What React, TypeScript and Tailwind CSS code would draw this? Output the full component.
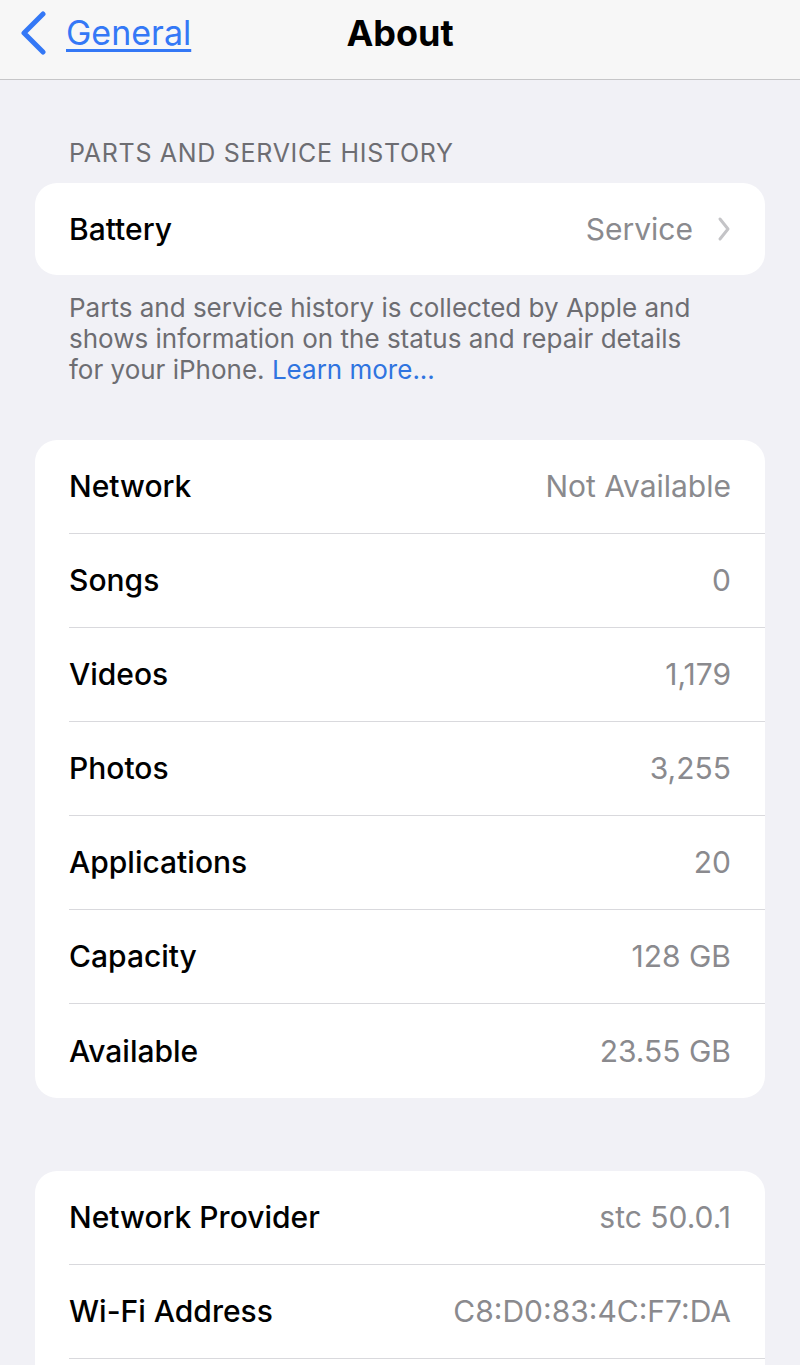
const rows1 = [
  { label: "Network", value: "Not Available" },
  { label: "Songs", value: "0" },
  { label: "Videos", value: "1,179" },
  { label: "Photos", value: "3,255" },
  { label: "Applications", value: "20" },
  { label: "Capacity", value: "128 GB" },
  { label: "Available", value: "23.55 GB" },
];

const rows2 = [
  { label: "Network Provider", value: "stc 50.0.1" },
  { label: "Wi-Fi Address", value: "C8:D0:83:4C:F7:DA" },
];

function Row({ label, value, last }: { label: string; value: string; last?: boolean }) {
  return (
    <div className="pl-[34px]">
      <div
        className={
          "flex items-center justify-between h-[94px] pr-[34px] " +
          (last ? "" : "border-b border-[#d9d9dd]")
        }
      >
        <span className="text-[30px] font-medium text-black">{label}</span>
        <span className="text-[30px] text-[#8a8a8e]">{value}</span>
      </div>
    </div>
  );
}

export default function App() {
  return (
    <div
      className="h-[1365px] w-[800px] overflow-hidden bg-[#f1f1f6]"
      style={{ fontFamily: "Inter, 'Noto Sans', sans-serif" }}
    >
      <header className="relative flex h-[80px] items-center border-b border-[#c6c6c8] bg-[#f7f7f7] pb-[14px]">
        <div className="flex items-center pl-[18px] text-[#3478f6]">
          <svg width="30" height="44" viewBox="0 0 30 44" fill="none">
            <path
              d="M25 3 L6 22 L25 41"
              stroke="#3478f6"
              strokeWidth="5"
              strokeLinecap="round"
              strokeLinejoin="round"
            />
          </svg>
          <span className="ml-[18px] text-[34px] leading-[40px] underline decoration-[3px] underline-offset-[4px]">
            General
          </span>
        </div>
        <div className="absolute left-0 right-0 top-0 flex h-[65px] items-center justify-center pointer-events-none">
          <span className="text-[36px] leading-[40px] font-bold text-black">About</span>
        </div>
      </header>

      <main className="pt-[58px]">
        <div className="px-[69px] text-[25px] leading-[30px] tracking-[0.7px] text-[#6d6d72]">
          PARTS AND SERVICE HISTORY
        </div>

        <div className="mx-[35px] mt-[15px] flex h-[92px] items-center justify-between rounded-[22px] bg-white pl-[34px] pr-[34px]">
          <span className="text-[30px] font-medium text-black">Battery</span>
          <div className="flex items-center gap-[24px]">
            <span className="text-[30px] text-[#8a8a8e]">Service</span>
            <svg width="14" height="26" viewBox="0 0 14 26" fill="none">
              <path
                d="M3 3 L11 13 L3 23"
                stroke="#c4c4c7"
                strokeWidth="3"
                strokeLinecap="round"
                strokeLinejoin="round"
              />
            </svg>
          </div>
        </div>

        <p className="mt-[17px] px-[69px] text-[26px] leading-[31px] text-[#6d6d72] whitespace-nowrap">
          Parts and service history is collected by Apple and
          <br />
          shows information on the status and repair details
          <br />
          for your iPhone. <span className="text-[#2f74e0]">Learn more...</span>
        </p>

        <div className="mx-[35px] mt-[55px] overflow-hidden rounded-[22px] bg-white">
          {rows1.map((r, i) => (
            <Row key={r.label} label={r.label} value={r.value} last={i === rows1.length - 1} />
          ))}
        </div>

        <div className="mx-[35px] mt-[73px] overflow-hidden rounded-[22px] bg-white">
          {rows2.map((r) => (
            <Row key={r.label} label={r.label} value={r.value} />
          ))}
          <div className="h-[94px]" />
        </div>
      </main>
    </div>
  );
}
